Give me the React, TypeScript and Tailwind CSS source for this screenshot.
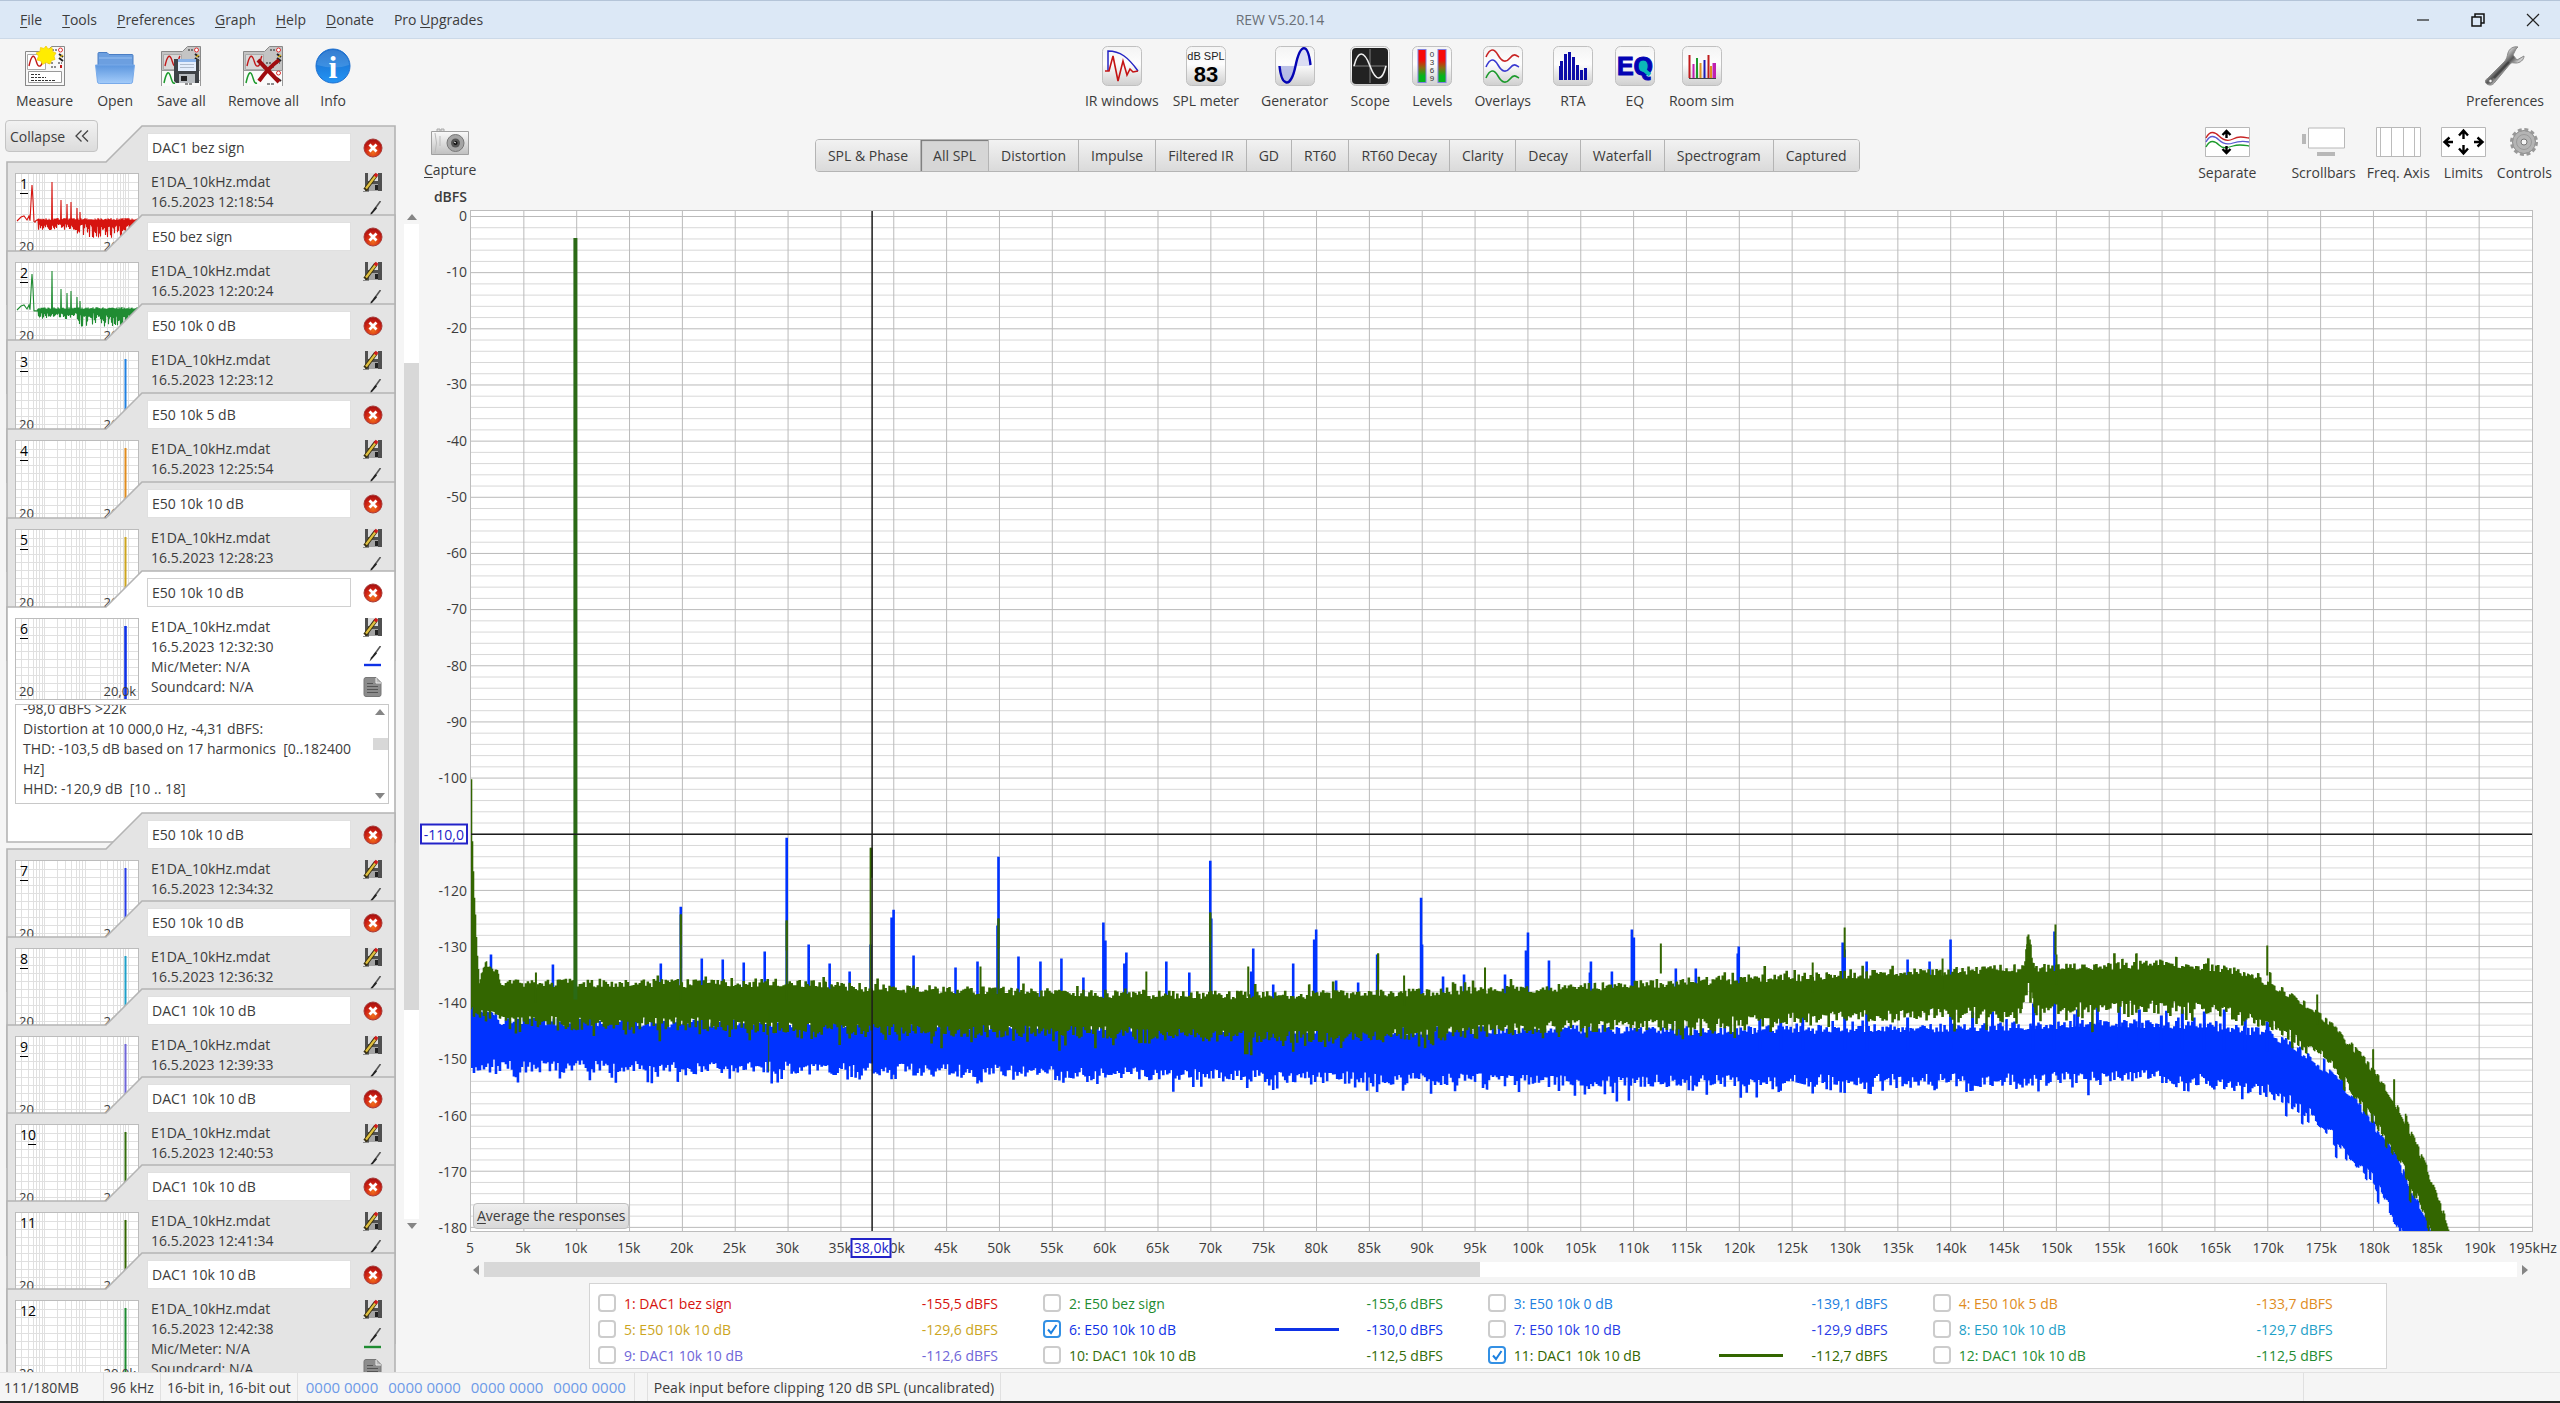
import React, { useEffect, useMemo, useRef } from 'react';
import clsx from 'clsx';

interface Measurement {
  id: number;
  title: string;
  time: string;
  value: string;
  color: string;
  plotted?: boolean;
}

const MEASUREMENTS: Measurement[] = [
  { id: 1, title: 'DAC1 bez sign', time: '16.5.2023 12:18:54', value: '-155,5 dBFS', color: '#d6140f' },
  { id: 2, title: 'E50 bez sign', time: '16.5.2023 12:20:24', value: '-155,6 dBFS', color: '#1f8c32' },
  { id: 3, title: 'E50 10k 0 dB', time: '16.5.2023 12:23:12', value: '-139,1 dBFS', color: '#2080e0' },
  { id: 4, title: 'E50 10k 5 dB', time: '16.5.2023 12:25:54', value: '-133,7 dBFS', color: '#e08c1e' },
  { id: 5, title: 'E50 10k 10 dB', time: '16.5.2023 12:28:23', value: '-129,6 dBFS', color: '#cca51e' },
  { id: 6, title: 'E50 10k 10 dB', time: '16.5.2023 12:32:30', value: '-130,0 dBFS', color: '#0f32e6', plotted: true },
  { id: 7, title: 'E50 10k 10 dB', time: '16.5.2023 12:34:32', value: '-129,9 dBFS', color: '#283ce6' },
  { id: 8, title: 'E50 10k 10 dB', time: '16.5.2023 12:36:32', value: '-129,7 dBFS', color: '#1ea0c8' },
  { id: 9, title: 'DAC1 10k 10 dB', time: '16.5.2023 12:39:33', value: '-112,6 dBFS', color: '#7066d8' },
  { id: 10, title: 'DAC1 10k 10 dB', time: '16.5.2023 12:40:53', value: '-112,5 dBFS', color: '#336d0c' },
  { id: 11, title: 'DAC1 10k 10 dB', time: '16.5.2023 12:41:34', value: '-112,7 dBFS', color: '#336600', plotted: true },
  { id: 12, title: 'DAC1 10k 10 dB', time: '16.5.2023 12:42:38', value: '-112,5 dBFS', color: '#1f8c32' },
];

const SELECTED = 6;

const NOTES = `-98,0 dBFS >22k
Distortion at 10 000,0 Hz, -4,31 dBFS:
THD: -103,5 dB based on 17 harmonics  [0..182400 Hz]
HHD: -120,9 dB  [10 .. 18]


`;

const MENUS = ['&File', '&Tools', '&Preferences', '&Graph', '&Help', '&Donate', 'Pro &Upgrades'];

const TABS = [
  'SPL & Phase', 'All SPL', 'Distortion', 'Impulse', 'Filtered IR', 'GD', 'RT60',
  'RT60 Decay', 'Clarity', 'Decay', 'Waterfall', 'Spectrogram', 'Captured',
];

// Label with its mnemonic letter underlined: "&File"
const Mnemonic = ({ text }: { text: string }) => {
  const at = text.indexOf('&');
  if (at < 0) return <>{text}</>;
  return (
    <span className="whitespace-pre">
      {text.slice(0, at)}
      <span className="underline underline-offset-2">{text[at + 1]}</span>
      {text.slice(at + 2)}
    </span>
  );
};

/* ---------- Spectrum data ---------- */

const PLOT_W = 2063;
const PLOT_H = 1022;
const PX_PER_DB = 5.627;
const dbToY = (db: number) => 5.5 - db * PX_PER_DB;

type Pt = [number, number];

const random = (seed: number) => {
  let s = seed;
  return () => {
    s = (s * 1664525 + 1013904223) % 4294967296;
    return s / 4294967296;
  };
};

const lerp = (pts: Pt[], x: number) => {
  for (let i = 1; i < pts.length; i++) {
    if (x <= pts[i][0]) {
      const [x0, y0] = pts[i - 1];
      const [x1, y1] = pts[i];
      return y0 + ((y1 - y0) * (x - x0)) / (x1 - x0);
    }
  }
  return PLOT_H + 20;
};

const GREEN_TOP: Pt[] = [
  [0, 570], [1, 632], [3, 685], [5, 730], [8, 770], [10, 762], [16, 756], [26, 758], [30, 773], [105, 772], [330, 772],
  [380, 776], [530, 780], [610, 783], [810, 784], [930, 782], [1030, 778], [1120, 776], [1230, 770], [1330, 766], [1430, 762],
  [1530, 758], [1553, 757], [1559, 728], [1565, 757], [1630, 756], [1690, 753], [1740, 757], [1770, 760], [1798, 772],
  [1826, 788], [1851, 804], [1869, 820], [1887, 841], [1905, 862], [1923, 886], [1941, 921], [1958, 960], [1973, 1000], [1981, 1024],
];
const GREEN_BOTTOM: Pt[] = [
  [0, 800], [30, 808], [105, 812], [230, 812], [380, 818], [610, 820], [810, 826], [930, 822], [1030, 818], [1120, 814],
  [1230, 812], [1330, 806], [1430, 804], [1530, 800], [1552, 800], [1556, 774], [1561, 774], [1565, 797], [1640, 794],
  [1730, 796], [1780, 806], [1812, 818], [1841, 834], [1869, 861], [1887, 886], [1905, 910], [1919, 934], [1930, 951],
  [1944, 975], [1955, 1001], [1963, 1024],
];
const BLUE_TOP: Pt[] = [
  [0, 790], [30, 810], [380, 814], [810, 818], [930, 820], [1130, 818], [1230, 820], [1530, 816], [1630, 812], [1730, 814],
  [1798, 822], [1826, 836], [1844, 850], [1862, 864], [1887, 890], [1901, 910], [1919, 935], [1933, 960], [1946, 990], [1955, 1004], [1961, 1024],
];
const BLUE_BOTTOM: Pt[] = [
  [0, 854], [380, 857], [610, 861], [810, 865], [1030, 868], [1230, 869], [1530, 868], [1680, 864], [1730, 868], [1798, 878],
  [1816, 887], [1834, 898], [1851, 911], [1869, 928], [1887, 950], [1905, 970], [1919, 994], [1930, 1016], [1933, 1024],
];

const BLUE_PEAKS: Pt[] = [
  [20, 745], [82, 755], [190, 754], [210, 697], [231, 749], [252, 750], [273, 753], [294, 742], [316, 628], [338, 735],
  [359, 754], [379, 762], [400, 735], [421, 708], [423, 700], [443, 746], [485, 758], [507, 752], [527, 716], [528, 647], [548, 747],
  [570, 752], [591, 749], [613, 768], [633, 713], [635, 731], [654, 754], [656, 743], [696, 752], [719, 763], [740, 651],
  [741, 709], [781, 762], [783, 739], [803, 775], [823, 754], [844, 730], [846, 720], [866, 771], [888, 773], [907, 745], [951, 688],
  [952, 735], [973, 767], [994, 765], [1035, 765], [1056, 741], [1058, 723], [1079, 751], [1120, 763], [1121, 752], [1142, 762],
  [1162, 720], [1164, 728], [1206, 759], [1226, 759], [1268, 744], [1269, 737], [1373, 733], [1375, 740], [1397, 752],
  [1438, 750], [1460, 752], [1481, 730], [1585, 722],
];
const GREEN_PEAKS: Pt[] = [
  [65, 763], [210, 705], [316, 711], [401, 638], [528, 709], [510, 757], [676, 762], [740, 703], [778, 757], [908, 744],
  [934, 766], [1015, 758], [1191, 734], [1343, 753], [1375, 718], [1473, 749], [1558, 727], [1559, 725], [1586, 715], [1587, 745],
  [1798, 736], [1848, 785], [1904, 840], [1925, 870],
];
// Blue spurs that stand in the gap between the two noise bands
const BLUE_SPURS: Pt[] = [
  [1290, 804], [1311, 806], [1333, 804], [1375, 806], [1397, 804], [1438, 808], [1481, 798], [1503, 802], [1523, 802],
  [1564, 794], [1585, 794], [1608, 800], [1628, 796], [1650, 790], [1670, 800], [1692, 806], [1713, 800], [1735, 802],
  [1755, 800], [1776, 806], [1798, 812],
];

const noiseBand = (top: Pt[], bottom: Pt[], seed: number) => {
  const rnd = random(seed);
  let d = '';
  let crest = 0;
  let trough = 0;
  for (let x = 0; x < PLOT_W; x++) {
    if (x % 2 === 0) {
      crest = rnd() * 9 - 3 - (rnd() > 0.93 ? rnd() * 10 : 0);
      trough = rnd() * 13 - 4 + (rnd() > 0.8 ? rnd() * 13 : 0) + (rnd() > 0.98 ? 15 : 0);
    }
    const t = lerp(top, x) + crest;
    const b = Math.min(lerp(bottom, x) + trough, PLOT_H);
    if (t < PLOT_H) d += `M${x + 0.5} ${t.toFixed(1)}V${b.toFixed(1)}`;
  }
  return d;
};

const peaks = (pts: Pt[], foot: number) => pts.map(([x, y]) => `M${x} ${y}V${Math.max(foot, y + 30)}`).join('');

const Spectrum = () => {
  const paths = useMemo(
    () => ({
      blue: noiseBand(BLUE_TOP, BLUE_BOTTOM, 7),
      green: noiseBand(GREEN_TOP, GREEN_BOTTOM, 91),
    }),
    [],
  );
  const minor: string[] = [];
  const major: string[] = [];
  for (let db = 0; db >= -180; db -= 2) {
    (db % 10 === 0 ? major : minor).push(`M0 ${dbToY(db)}H${PLOT_W}`);
  }
  for (let i = 1; i < 39; i++) major.push(`M${(i * PLOT_W) / 39} 0V${PLOT_H}`);

  return (
    <svg viewBox={`0 0 ${PLOT_W} ${PLOT_H}`} preserveAspectRatio="none" className="absolute inset-0 h-full w-full bg-white">
      <path d={minor.join('')} stroke="#d8d8d8" shapeRendering="crispEdges" vectorEffect="non-scaling-stroke" />
      <path d={major.join('')} stroke="#bababa" shapeRendering="crispEdges" vectorEffect="non-scaling-stroke" />
      <g stroke="#0033ff" fill="none">
        <path d={paths.blue} strokeWidth="1.6" />
        <path d={peaks(BLUE_PEAKS, 800)} strokeWidth="2.6" />
        <path d={peaks(BLUE_SPURS, 840)} strokeWidth="3" />
      </g>
      <g stroke="#336600" fill="none">
        <path d={paths.green} strokeWidth="1.6" />
        <path d={peaks(GREEN_PEAKS, 0)} strokeWidth="2" />
        <path d="M210 705V790M316 711V790M528 709V790M740 703V790M908 744V790M400 638V800" strokeWidth="2" />
        <path d="M298 800V862" strokeWidth="1" />
        <path d="M104.500 27V790" stroke="#2b6a16" strokeWidth="4" />
        <path d="M0.5 570V800" strokeWidth="1" />
      </g>
      <path d={`M0 624.5H${PLOT_W}M401.5 0V${PLOT_H}`} stroke="#1c1c1c" strokeWidth="1.5" vectorEffect="non-scaling-stroke" />
    </svg>
  );
};

/* ---------- Measurement thumbnails ---------- */

const THUMB_GRID = (() => {
  const v = [5, 12, 17, 20, 23, 26, 28, 41, 49, 55, 60, 63, 66, 69, 84, 91, 97, 101, 104, 107, 109, 112];
  const h = [8, 16, 24, 32, 40, 48, 56, 64, 72];
  return v.map((x) => `M${x}.5 0V82`).join('') + h.map((y) => `M0 ${y}.5H124`).join('');
})();

const thumbNoise = (seed: number) => {
  const rnd = random(seed);
  let d = 'M1 47L5 43 8 42 11 46 13 42';
  const spikes: Record<number, number> = { 16: 11, 36: 8, 45: 26, 51: 30, 55: 28, 61: 34, 64: 38 };
  for (let x = 14; x < 124; x++) {
    if (x < 22) {
      d += `L${x} ${x === 16 ? 11 : x === 15 ? 28 : x === 17 ? 26 : 46 + rnd() * 3}`;
      continue;
    }
    const low = x > 60 ? 14 : 6;
    d += `L${x} ${(spikes[x] ?? 46 - rnd() * 2).toFixed(1)}L${x}.5 ${(50 + rnd() * low).toFixed(1)}`;
  }
  return d;
};

const Thumbnail = ({ m }: { m: Measurement }) => {
  const label = String(m.id);
  return (
    <div className="relative mt-px h-[82px] w-[124px] shrink-0 overflow-hidden border border-[#bcbcbc] bg-white">
      <svg viewBox="0 0 124 82" className="absolute inset-0" width="124" height="82">
        <path d={THUMB_GRID} stroke="#e0e0e0" />
        {m.id < 3 ? (
          <path d={thumbNoise(m.id * 13)} stroke={m.color} strokeWidth="1.1" fill="none" />
        ) : (
          <path d="M109.500 7V81" stroke={m.color} strokeWidth={m.id === SELECTED ? 2.6 : 2} />
        )}
      </svg>
      <span className="absolute left-1 top-0 leading-5 text-black">
        {label.slice(0, -1)}
        <span className={clsx(m.id < 11 && 'underline underline-offset-4')}>{label.slice(-1)}</span>
      </span>
      <span className="absolute bottom-0 left-[3px] text-[13px] leading-4">20</span>
      <span className="absolute bottom-0 right-[2px] text-[13px] leading-4">20,0k</span>
    </div>
  );
};

/* ---------- Icons ---------- */

const CloseBadge = () => (
  <svg width="20" height="20" viewBox="0 0 20 20">
    <defs>
      <radialGradient id="badge" cx="0.5" cy="0.75" r="0.7">
        <stop offset="0" stopColor="#f0701c" />
        <stop offset="0.6" stopColor="#d02414" />
        <stop offset="1" stopColor="#a81010" />
      </radialGradient>
    </defs>
    <circle cx="10" cy="10" r="9" fill="url(#badge)" stroke="#a83c38" />
    <path d="M6.5 6.5l7 7M13.5 6.5l-7 7" stroke="#fff" strokeWidth="2.8" />
  </svg>
);

const DiskPencil = () => (
  <svg width="20" height="20" viewBox="0 0 20 20">
    <path d="M2 1h3v7h10V1h4v18H2z" fill="#505050" />
    <path d="M5 1h10v8H5z" fill="#dcdcdc" />
    <path d="M6 12h9v7H6z" fill="#a4a4a4" />
    <path d="M12 13h3v5h-3z" fill="#222" />
    <path d="M2 18L13 3" stroke="#3a3010" strokeWidth="4" />
    <path d="M3 16.500L12.500 4" stroke="#e0c040" strokeWidth="2.200" />
    <path d="M12 4.500l2-2.700" stroke="#d01c1c" strokeWidth="3.400" />
    <path d="M0 19.500h6" stroke="#8a8a8a" />
  </svg>
);

const Brush = ({ color }: { color: string }) => (
  <svg width="20" height="22" viewBox="0 0 20 22">
    <path d="M17.500 0L11 9" stroke="#555" strokeWidth="1.600" />
    <path d="M12.500 6l1.500 1.300L9 13l-2.500 2.500L8 11.500z" fill="#222" />
    <path d="M1 19h17" stroke={color} strokeWidth="2.400" />
  </svg>
);

const Note = () => (
  <svg width="20" height="20" viewBox="0 0 20 20">
    <path d="M3 .5h10l5 5v12a2 2 0 0 1-2 2H3a2 2 0 0 1-2-2v-15a2 2 0 0 1 2-2z" fill="#8c8c8c" stroke="#777" />
    <path d="M13 1v5h5" fill="#bbb" stroke="#eee" />
    <path d="M4 6.500h6M4 9.500h11M4 12.500h11M4 15.500h11" stroke="#555" />
  </svg>
);

const MiniSheet = ({ shaded }: { shaded?: boolean }) => (
  <>
    <path d="M.5 40V5.500h21l5-5h13V40z" fill={shaded ? '#c4c4c4' : '#f8f8f8'} stroke="#888" />
    <path d="M2.500 8.500h18v15h-18z" fill={shaded ? '#d8d8d8' : '#fff'} stroke="#aaa" />
    <path d="M4 20c2-9 4-12 6-8s2 9 5 8 2-8 4-10" fill="none" stroke="#c01818" strokeWidth="1.400" />
    <circle cx="35.500" cy="4" r="2" fill="#fff" stroke="#e03030" />
    <path d="M34 8l4 3M34 12l4 3" stroke="#222" strokeWidth="2" />
    <path d="M35 11l3-2" stroke="#d8b020" strokeWidth="1.500" />
    <path d="M23 17h6M26 21h5M33 17h4M27 4h6" stroke="#222" strokeDasharray="2 1" />
  </>
);

const MeasureIcon = () => (
  <svg width="40" height="40" viewBox="0 0 40 40">
    <MiniSheet />
    <path d="M.5 24V39.500h39V24" fill="#f8f8f8" stroke="#888" />
    <path d="M3.500 25.500h33v11h-33z" fill="#fff" stroke="#999" />
    <path d="M6 28.500h9M6 31.500h15M6 34.500h24" stroke="#333" strokeDasharray="3 1 2 1" />
    <path d="M36 19v3" stroke="#c01818" strokeWidth="2" />
    <path
      d="M21 0l2 3 4-1.500.5 4L31 7l-2 3 1 3.500-3.500 1L25 18l-4-1.500-3.500 2-1.500-3.500-4-1 1.500-4L11 7l4-1.500.5-4 3.500 1z"
      fill="#ffec00"
      stroke="#f4cc10"
      strokeWidth="0.800"
    />
  </svg>
);

const OpenIcon = () => (
  <svg width="40" height="40" viewBox="0 0 40 40">
    <defs>
      <linearGradient id="folder" x2="0" y2="1">
        <stop offset="0" stopColor="#5c96de" />
        <stop offset="1" stopColor="#a4ccfa" />
      </linearGradient>
    </defs>
    <path d="M3 7.500q0-1 1-1h8l2 2h23q1 0 1 1V22H3z" fill="#6c9fe0" stroke="#4a7ec4" />
    <path d="M4 12h33" stroke="#98c0f0" />
    <path d="M.5 19h39l-2 17q-.2 1.500-2 1.500h-31q-1.800 0-2-1.500z" fill="url(#folder)" stroke="#78aaea" />
  </svg>
);

const StackedSheets = () => (
  <>
    <MiniSheet shaded />
    <path d="M.5 40V24.500h39V40" fill="#fafafa" stroke="#999" />
    <path d="M3 37c2-9 4-13 6-8s2 9 5 8" fill="none" stroke="#1c9a2c" strokeWidth="1.500" />
    <path d="M24 38h8" stroke="#222" strokeDasharray="3 1" />
    <circle cx="35.500" cy="27" r="2" fill="#fff" stroke="#e03030" />
    <path d="M34 32l4 3" stroke="#222" strokeWidth="2" />
  </>
);

const SaveAllIcon = () => (
  <svg width="40" height="40" viewBox="0 0 40 40">
    <StackedSheets />
    <path d="M13 13h25v24H15l-2-2z" fill="#3e4246" />
    <path d="M17 13h18v12H17z" fill="#e4eefc" />
    <path d="M17 13h18v3H17z" fill="#8cb4e8" />
    <path d="M19 18.500h14M19 21.500h14" stroke="#b0bccc" />
    <path d="M18 28h16v9H18z" fill="#b8bcc0" />
    <path d="M20 30h6v5h-6z" fill="#222" />
  </svg>
);

const RemoveAllIcon = () => (
  <svg width="40" height="40" viewBox="0 0 40 40">
    <StackedSheets />
    <path d="M15 14l21 22" stroke="#a00c10" strokeWidth="4" />
    <path d="M36 14C28 20 21 28 16 35" stroke="#a00c10" strokeWidth="4" fill="none" />
  </svg>
);

const InfoIcon = () => (
  <svg width="40" height="40" viewBox="0 0 40 40">
    <defs>
      <linearGradient id="info" x2="0" y2="1">
        <stop offset="0" stopColor="#1668c8" />
        <stop offset="1" stopColor="#2494f4" />
      </linearGradient>
    </defs>
    <circle cx="20" cy="20" r="17" fill="url(#info)" stroke="#1e70d0" />
    <path d="M4 19a16 15 0 0 1 32 0q-14 5-32 0z" fill="#fff" opacity="0.140" />
    <text x="20" y="32" textAnchor="middle" fontSize="32" fontWeight="700" fontFamily="Liberation Serif" fill="#fff">i</text>
  </svg>
);

const Tile = ({ children, dark }: { children: React.ReactNode; dark?: boolean }) => (
  <svg width="40" height="40" viewBox="0 0 40 40">
    <defs>
      <linearGradient id="tile" x2="0" y2="1">
        <stop offset="0" stopColor="#f4f4f4" />
        <stop offset="0.450" stopColor="#fdfdfd" />
        <stop offset="1" stopColor="#cfcfcf" />
      </linearGradient>
    </defs>
    <rect x="0.500" y="0.500" width="39" height="39" rx="5" fill="url(#tile)" stroke="#c0c0c0" />
    {dark && <rect x="2" y="2" width="36" height="36" rx="4" fill="#222" />}
    {children}
  </svg>
);

const IrIcon = () => (
  <Tile>
    <path d="M6 25V5c12 0 20 6 30 20" fill="none" stroke="#2424c4" strokeWidth="1.500" />
    <path d="M3 25h4L11 10l5 25 5-20 4 14 3-6 3 3 5-1" fill="none" stroke="#c41414" strokeWidth="1.600" />
  </Tile>
);
const SplIcon = () => (
  <Tile>
    <text x="20" y="14" textAnchor="middle" fontSize="11" fontFamily="Liberation Sans" fill="#222">dB SPL</text>
    <text x="20" y="36" textAnchor="middle" fontSize="22" fontWeight="700" fontFamily="Liberation Sans" fill="#000">83</text>
  </Tile>
);
const GeneratorIcon = () => (
  <Tile>
    <path d="M4 20c3 22 12 22 16 0z" fill="#aab2e4" opacity="0.800" />
    <path d="M20 20C23-1 33-2 36 20z" fill="#c4c8ec" opacity="0.600" />
    <path d="M4.500 20c2 20 11 24 16 0S33-3 35.500 19" fill="none" stroke="#0404b4" strokeWidth="2.400" />
  </Tile>
);
const ScopeIcon = () => (
  <Tile dark>
    <path d="M20 3v34M3 20h34" stroke="#999" strokeWidth="0.800" />
    <path d="M4 20C8 4 14 4 20 20s12 16 16 0" fill="none" stroke="#eee" strokeWidth="1.600" />
  </Tile>
);
const LevelsIcon = () => (
  <Tile>
    <defs>
      <linearGradient id="meter" x2="0" y2="1">
        <stop offset="0.300" stopColor="#f80808" />
        <stop offset="0.550" stopColor="#8c6a10" />
        <stop offset="0.800" stopColor="#04b41c" />
      </linearGradient>
    </defs>
    <rect x="6" y="3.500" width="8" height="33" fill="url(#meter)" stroke="#8080e0" />
    <rect x="26" y="3.500" width="8" height="33" fill="url(#meter)" stroke="#8080e0" />
    {['0', '3', '6', '9'].map((n, i) => (
      <text key={n} x="20" y={11 + i * 8} textAnchor="middle" fontSize="8" fontFamily="Liberation Sans" fill="#333">{n}</text>
    ))}
  </Tile>
);
const OverlaysIcon = () => (
  <Tile>
    <g fill="none" strokeWidth="1.600">
      <path d="M3 11C7 2 11 2 15 9s8 8 12 3 6-3 9-1" stroke="#c82424" />
      <path d="M3 21c4-9 8-9 12-2s8 8 12 3 6-3 9-1" stroke="#3a3ad0" />
      <path d="M3 32c4-9 8-9 12-2s8 8 12 3 6-3 9-1" stroke="#1c9a2c" />
    </g>
  </Tile>
);
const RtaIcon = () => (
  <Tile>
    <path d="M8.500 34V15M12.500 34V8M16.500 34V6M20.500 34V11M24.500 34V19M28.500 34V24M32.500 34V22" stroke="#0c0ca8" strokeWidth="3" />
    <path d="M6.500 34V20" stroke="#0c0ca8" strokeWidth="1" />
  </Tile>
);
const EqIcon = () => (
  <Tile>
    <circle cx="27" cy="20" r="7" fill="#0cb8b8" />
    <text x="20" y="29" textAnchor="middle" fontSize="25" fontWeight="700" fontFamily="Liberation Sans" fill="#0404b4" stroke="#0404b4">EQ</text>
    <path d="M28 23l7 6" stroke="#0cb8b8" strokeWidth="4" />
  </Tile>
);
const RoomSimIcon = () => (
  <Tile>
    <path d="M7 32.500h27" stroke="#444" />
    <path d="M7.500 32V9M26.500 32V9" stroke="#c01c1c" strokeWidth="2" />
    <path d="M11.500 32V18M31.500 32V17M33 32V17" stroke="#c020b0" strokeWidth="2" />
    <path d="M15 32V12" stroke="#1c9a2c" strokeWidth="2" />
    <path d="M18.500 32V17M29 32V20" stroke="#e09020" strokeWidth="2" />
    <path d="M22.500 32V14" stroke="#1c1cb8" strokeWidth="2" />
  </Tile>
);

const WrenchIcon = () => (
  <svg width="40" height="40" viewBox="0 0 40 40">
    <defs>
      <linearGradient id="steel" x2="1" y2="1">
        <stop offset="0.350" stopColor="#d0d0d0" />
        <stop offset="0.500" stopColor="#555" />
        <stop offset="0.620" stopColor="#ccc" />
      </linearGradient>
    </defs>
    <path
      d="M2 33L20 15c2-3 2-4 3-8s5-7 10-6l-2 2-3 6 4 5 7-4c0 4-4 7-8 7-3 0-4-1-6 1L10 36c-2 3-5 4-8 2s-2-4 0-5z"
      fill="url(#steel)"
      stroke="#888"
    />
    <path d="M9 32L24 16" stroke="#3a3a3a" strokeWidth="2.400" opacity="0.700" />
    <circle cx="5.500" cy="35" r="1.800" fill="#f5f5f5" stroke="#666" />
  </svg>
);

const CameraIcon = () => (
  <svg width="38" height="30" viewBox="0 0 38 30">
    <defs>
      <linearGradient id="camera" x2="0" y2="1">
        <stop offset="0" stopColor="#fafafa" />
        <stop offset="1" stopColor="#c0c0c0" />
      </linearGradient>
    </defs>
    <path d="M6 4V2h3v2M10 4V2h3v2" fill="#ddd" stroke="#aaa" />
    <path d="M.5 4.500h37v23H.5z" fill="url(#camera)" stroke="#a0a0a0" />
    <path d="M4 6q3 10 0 20M9 9v10" stroke="#bbb" fill="none" />
    <circle cx="24.500" cy="16" r="8.500" fill="#a4a4a4" stroke="#777" />
    <circle cx="24.500" cy="16" r="4.500" fill="#555" />
    <circle cx="24.500" cy="16" r="2" fill="#111" />
    <path d="M23 15l2 1" stroke="#eee" />
  </svg>
);

const SeparateIcon = () => (
  <svg width="45" height="30" viewBox="0 0 45 30">
    <path d="M.5.500h44v29H.5z" fill="#fff" stroke="#b8b8b8" />
    <g fill="none" strokeWidth="1.300">
      <path d="M1 11C5 3 10 5 14 9s8 6 14 3 10-2 16-1" stroke="#c82424" />
      <path d="M1 15C5 7 10 9 14 13s8 5 14 3 10-2 16-1" stroke="#5a5ad0" />
      <path d="M1 20c4-8 9-6 13-2s8 3 14 1 10-1 16 0" stroke="#1c9a2c" />
    </g>
    <path d="M21.500 11V5M17.500 8l4-4 4 4M21.500 19v6M17.500 22l4 4 4-4" stroke="#000" strokeWidth="2.400" fill="none" />
  </svg>
);
const ScrollbarsIcon = () => (
  <svg width="45" height="30" viewBox="0 0 45 30">
    <path d="M7.500 1h36v20h-36z" fill="#fff" stroke="#b8b8b8" />
    <path d="M1 7h4v10H1zM16 25h18v4H16z" fill="#b8b8b8" />
  </svg>
);
const FreqAxisIcon = () => (
  <svg width="45" height="30" viewBox="0 0 45 30">
    <path d="M.5.500h44v29H.5z" fill="#fff" stroke="#b8b8b8" />
    <path d="M4.500 1v28M15.500 1v28M27.500 1v28M38.500 1v28" stroke="#bcbcbc" />
  </svg>
);
const LimitsIcon = () => (
  <svg width="45" height="30" viewBox="0 0 45 30">
    <path d="M.5.500h44v29H.5z" fill="#fff" stroke="#b8b8b8" />
    <path
      d="M22.500 12V5M18 8.500l4.500-5 4.500 5M22.500 18v7M18 21.500l4.500 5 4.500-5M12 15H4M8.500 10.500l-5 4.500 5 4.500M33 15h8M36.500 10.500l5 4.500-5 4.500"
      stroke="#000"
      strokeWidth="2.400"
      fill="none"
    />
  </svg>
);
const GearIcon = () => (
  <svg width="30" height="30" viewBox="0 0 30 30">
    <circle cx="15" cy="15" r="11.500" fill="#b4b4b4" stroke="#8c8c8c" />
    <circle cx="15" cy="15" r="12.500" fill="none" stroke="#989898" strokeWidth="3" strokeDasharray="3.900 2.640" />
    <circle cx="15" cy="15" r="7.500" fill="none" stroke="#9a9a9a" />
    <circle cx="15" cy="15" r="3" fill="#f5f5f5" stroke="#777" />
  </svg>
);

const Arrow = ({ dir }: { dir: 'up' | 'down' | 'left' | 'right' }) => {
  const d = { up: 'M0 8L5 2 10 8z', down: 'M0 2L5 8 10 2z', left: 'M8 0L2 5 8 10z', right: 'M2 0L8 5 2 10z' }[dir];
  return (
    <svg width="10" height="10" viewBox="0 0 10 10" className="shrink-0">
      <path d={d} fill="#858585" />
    </svg>
  );
};

/* ---------- Chrome ---------- */

const ToolButton = ({ icon, label, className }: { icon: React.ReactNode; label: string; className?: string }) => (
  <button type="button" className={clsx('flex flex-col items-center gap-[5px] leading-5', className)}>
    {icon}
    <Mnemonic text={label} />
  </button>
);

const TitleBar = () => (
  <header className="grid h-[39px] shrink-0 grid-cols-[1fr_auto_1fr] items-center border-y border-t-[#b4c4d8] border-b-[#ccd9e8] bg-[#dce8f6]">
    <nav className="flex gap-5 pl-5">
      {MENUS.map((m) => (
        <button key={m} type="button"><Mnemonic text={m} /></button>
      ))}
    </nav>
    <h1 className="text-[#6a6f76]">REW V5.20.14</h1>
    <div className="flex justify-end">
      <button type="button" aria-label="Minimize" className="flex h-9 w-[55px] items-center justify-center">
        <svg width="14" height="14" viewBox="0 0 14 14"><path d="M1 7h12" stroke="#222" strokeWidth="1.200" /></svg>
      </button>
      <button type="button" aria-label="Restore" className="flex h-9 w-[55px] items-center justify-center">
        <svg width="14" height="14" viewBox="0 0 14 14" fill="none" stroke="#111" strokeWidth="1.500">
          <path d="M1 4h9v9H1zM4 4V1h9v9h-3" />
        </svg>
      </button>
      <button type="button" aria-label="Close" className="flex h-9 w-[55px] items-center justify-center">
        <svg width="14" height="14" viewBox="0 0 14 14"><path d="M1 1l12 12M13 1L1 13" stroke="#222" strokeWidth="1.200" /></svg>
      </button>
    </div>
  </header>
);

const Toolbar = () => (
  <div className="flex h-[81px] shrink-0 items-start justify-between px-4 pt-[7px]">
    <div className="flex gap-[22px]">
      <ToolButton icon={<MeasureIcon />} label="Measure" />
      <ToolButton icon={<OpenIcon />} label="Open" />
      <ToolButton icon={<SaveAllIcon />} label="Save all" />
      <ToolButton icon={<RemoveAllIcon />} label="Remove all" />
      <ToolButton icon={<InfoIcon />} label="Info" className="-ml-2" />
    </div>
    <div className="flex gap-[22px]">
      <ToolButton icon={<IrIcon />} label="IR windows" className="-mr-2" />
      <ToolButton icon={<SplIcon />} label="SPL meter" />
      <ToolButton icon={<GeneratorIcon />} label="Generator" />
      <ToolButton icon={<ScopeIcon />} label="Scope" />
      <ToolButton icon={<LevelsIcon />} label="Levels" />
      <ToolButton icon={<OverlaysIcon />} label="Overlays" />
      <ToolButton icon={<RtaIcon />} label="RTA" />
      <ToolButton icon={<EqIcon />} label="EQ" className="-mr-2" />
      <ToolButton icon={<RoomSimIcon />} label="Room sim" />
    </div>
    <ToolButton icon={<WrenchIcon />} label="Preferences" />
  </div>
);

const Notes = () => {
  const ref = useRef<HTMLTextAreaElement>(null);
  useEffect(() => {
    if (ref.current) ref.current.scrollTop = 6;
  }, []);
  return (
    <div className="mt-1 ml-[15px] flex h-[100px] w-[374px] border border-[#c8c8c8] bg-white">
      <textarea
        ref={ref}
        aria-label="Measurement notes"
        readOnly
        defaultValue={NOTES}
        className="h-full min-w-0 flex-1 resize-none overflow-hidden pl-[7px] leading-5 outline-none"
      />
      <div className="flex w-4 flex-col items-center justify-between py-[2px]">
        <Arrow dir="up" />
        <div className="mb-5 h-3 w-[15px] bg-[#d8d8d8]" />
        <Arrow dir="down" />
      </div>
    </div>
  );
};

const MeasurementCard = ({ m }: { m: Measurement }) => {
  const selected = m.id === SELECTED;
  const last = m.id === MEASUREMENTS.length;
  return (
    <li className={clsx('relative shrink-0', selected ? 'h-[242px]' : last ? 'h-[160px]' : m.id < SELECTED ? 'h-[89px]' : 'h-[88px]')}>
      <svg className="absolute left-0 top-0" width="400" height={selected ? 273 : 180} viewBox={`0 0 400 ${selected ? 273 : 180}`}>
        <path
          d={`M7 ${selected ? 272 : 200}V37H106L142 1H395V${selected ? 272 : 200}z`}
          fill={selected ? '#ffffff' : '#e4e4e4'}
          stroke="#b4b4b4"
          strokeWidth="1.600"
        />
      </svg>
      <div className="relative flex items-center pt-2 pl-[147px]">
        <input
          aria-label={`Name of measurement ${m.id}`}
          defaultValue={m.title}
          className={clsx('h-[29px] w-[204px] border bg-white pl-1 outline-none', selected ? 'border-[#d0d0d0]' : 'border-[#e0e0e0]')}
        />
        <button type="button" aria-label="Remove" className="ml-3"><CloseBadge /></button>
      </div>
      <div className="relative mt-[10px] flex pl-[15px]">
        <Thumbnail m={m} />
        <p className="ml-3 w-3 flex-1 leading-5 whitespace-pre">
          {`E1DA_10kHz.mdat\n${m.time}`}
          {(selected || last) && '\nMic/Meter: N/A\nSoundcard: N/A'}
        </p>
        <div className="mr-[21px] flex w-5 flex-col gap-[9px]">
          <DiskPencil />
          <Brush color={m.color} />
          {(selected || last) && <Note />}
        </div>
      </div>
      {selected && <div className="relative"><Notes /></div>}
    </li>
  );
};

const Sidebar = () => (
  <aside className="flex w-[420px] shrink-0 overflow-hidden">
    <div className="flex min-h-0 w-[404px] shrink-0 flex-col items-start">
      <button
        type="button"
        className="ml-[5px] flex h-8 shrink-0 items-center gap-[10px] rounded-[4px] border border-[#c4c4c4] bg-linear-to-b from-[#f2f2f2] to-[#dcdcdc] pl-[4px] pr-2"
      >
        Collapse
        <svg width="14" height="12" viewBox="0 0 14 12" fill="none" stroke="#444" strokeWidth="1.300">
          <path d="M6.500.500L1 6l5.500 5.500M13 .500L7.500 6l5.500 5.500" />
        </svg>
      </button>
      <ul className="-mt-[27px] flex min-h-0 w-full flex-1 flex-col overflow-hidden">
        {MEASUREMENTS.map((m) => <MeasurementCard key={m.id} m={m} />)}
      </ul>
    </div>
    <div className="mt-[92px] mb-[141px] flex w-[15px] flex-col items-center gap-[2px]">
      <Arrow dir="up" />
      <div className="flex w-full flex-1 flex-col bg-white">
        <div className="h-[14%]" />
        <div className="h-[65%] bg-[#d8d8d8]" />
      </div>
      <Arrow dir="down" />
    </div>
  </aside>
);

const GraphToolbar = () => (
  <div className="flex shrink-0 items-start justify-between pt-[7px] pr-2 pl-1">
    <button type="button" className="flex flex-col items-center gap-[3px] leading-5">
      <CameraIcon />
      <Mnemonic text="&Capture" />
    </button>
    <div role="tablist" className="mt-3 flex h-[33px] overflow-hidden rounded-[4px] border border-[#b4b4b4]">
      {TABS.map((t) => (
        <button
          key={t}
          type="button"
          role="tab"
          aria-selected={t === 'All SPL'}
          className={clsx(
            'border-r border-[#b4b4b4] px-3 last:border-r-0',
            t === 'All SPL' ? 'bg-[#d6d6d6] shadow-[inset_1px_1px_1px_#777]' : 'bg-linear-to-b from-[#f2f2f2] to-[#dadada]',
          )}
        >
          {t}
        </button>
      ))}
    </div>
    <div className="flex gap-[11px] leading-5">
      <button type="button" className="mr-6 flex flex-col items-center gap-[6px]"><SeparateIcon />Separate</button>
      <button type="button" className="flex flex-col items-center gap-[6px]"><ScrollbarsIcon />Scrollbars</button>
      <button type="button" className="flex flex-col items-center gap-[6px]"><FreqAxisIcon />Freq. Axis</button>
      <button type="button" className="flex flex-col items-center gap-[6px]"><LimitsIcon />Limits</button>
      <button type="button" className="flex flex-col items-center gap-[6px]"><GearIcon />Controls</button>
    </div>
  </div>
);

// The cursor readout stands in place of the -110 tick
const Y_TICKS = Array.from({ length: 19 }, (_, i) => (i === 0 ? '0' : i === 11 ? '' : `-${i * 10}`));
const X_TICKS = Array.from({ length: 40 }, (_, i) => (i === 0 ? '5' : i === 39 ? '195kHz' : `${i * 5}k`));

const Graph = () => (
  <section className="grid min-h-0 flex-1 grid-cols-[50px_minmax(0,1fr)] grid-rows-[27px_minmax(0,1fr)_30px] pr-[27px]">
    <div className="flex items-center justify-end pr-[3px] font-semibold">dBFS</div>
    <div />
    <div className="relative flex flex-col justify-between pt-[5px] pr-[3px] pb-1">
      {Y_TICKS.map((t, i) => (
        <span key={i} className="flex h-0 items-center justify-end">{t}</span>
      ))}
      <output className="absolute top-[61.1%] right-[2px] -translate-y-1/2 border-2 border-[#2323c8] bg-white px-[2px] leading-[17px] text-[#2323c8]">
        -110,0
      </output>
    </div>
    <div className="relative border border-[#bdbdbd]">
      <Spectrum />
      <button
        type="button"
        className="absolute bottom-[2px] left-[2px] h-[26px] rounded-[4px] border border-[#c0c0c0] bg-linear-to-b from-[#efefef] to-[#d8d8d8] px-[3px] leading-5"
      >
        <Mnemonic text="&Average the responses" />
      </button>
    </div>
    <div />
    <div className="relative flex justify-between pt-[6px] leading-5 whitespace-nowrap">
      {X_TICKS.map((t) => (
        <span key={t} className="flex w-0 justify-center">{t}</span>
      ))}
      <output className="absolute top-[6px] left-[19.45%] -translate-x-1/2 border-2 border-[#2323c8] bg-white px-px leading-4 text-[#2323c8]">
        38,0k
      </output>
    </div>
  </section>
);

const GraphScrollbar = () => (
  <div className="flex h-[15px] shrink-0 items-center gap-[3px] pr-[30px] pl-[51px]">
    <Arrow dir="left" />
    <div className="h-full flex-1 bg-white">
      <div className="h-full w-[49%] bg-[#d8d8d8]" />
    </div>
    <Arrow dir="right" />
  </div>
);

const Legend = () => (
  <fieldset className="mt-[6px] mr-[8.1%] mb-[3px] ml-[7.9%] grid shrink-0 grid-cols-4 border border-[#d4d4d4] bg-white px-2 pt-[6px]">
    {MEASUREMENTS.map((m) => (
      <label key={m.id} className="flex h-[26px] items-center pr-[45px]" style={{ color: m.color }}>
        <span className="relative mr-2 flex">
          <input
            type="checkbox"
            defaultChecked={m.plotted}
            className="peer size-[18px] appearance-none rounded-[4px] border-2 border-[#cccccc] bg-white checked:border-[#3390e4]"
          />
          <svg viewBox="0 0 18 18" className="pointer-events-none absolute inset-0 hidden peer-checked:block">
            <path d="M5 9.500l3 3.500L13.500 5" fill="none" stroke="#1c80e0" strokeWidth="2" />
          </svg>
        </span>
        <span className="flex-1">{`${m.id}: ${m.title}`}</span>
        {m.plotted && <span className="mr-7 h-[3px] w-16" style={{ backgroundColor: m.color }} />}
        <span>{m.value}</span>
      </label>
    ))}
  </fieldset>
);

const StatusBar = () => (
  <footer className="flex h-[31px] shrink-0 items-stretch border-t border-b-2 border-t-[#e2e2e2] border-b-[#222] leading-[29px] whitespace-pre">
    <span className="w-[104px] border-r border-[#e0e0e0] pl-1">111/180MB</span>
    <span className="border-r border-[#e0e0e0] px-[6px]">96 kHz</span>
    <span className="border-r border-[#e0e0e0] px-[6px]">16-bit in, 16-bit out</span>
    <span className="flex gap-[10px] border-r border-[#e0e0e0] px-2 text-[15px] text-[#6c9ae8]">
      {[0, 1, 2, 3].map((g) => <span key={g}>0000 0000</span>)}
    </span>
    <span className="ml-3 border-x border-[#e0e0e0] px-[6px]">Peak input before clipping 120 dB SPL (uncalibrated)</span>
    <span className="mr-[10%] flex-1 border-r border-[#e0e0e0]" />
  </footer>
);

export default function App() {
  return (
    <div className="flex h-screen flex-col overflow-hidden bg-[#f5f5f5] font-['Open_Sans','Noto_Sans',sans-serif] text-[14px] text-[#3c3c3c]">
      <TitleBar />
      <Toolbar />
      <div className="flex min-h-0 flex-1">
        <Sidebar />
        <main className="flex min-w-0 flex-1 flex-col">
          <GraphToolbar />
          <Graph />
          <GraphScrollbar />
          <Legend />
        </main>
      </div>
      <StatusBar />
    </div>
  );
}
